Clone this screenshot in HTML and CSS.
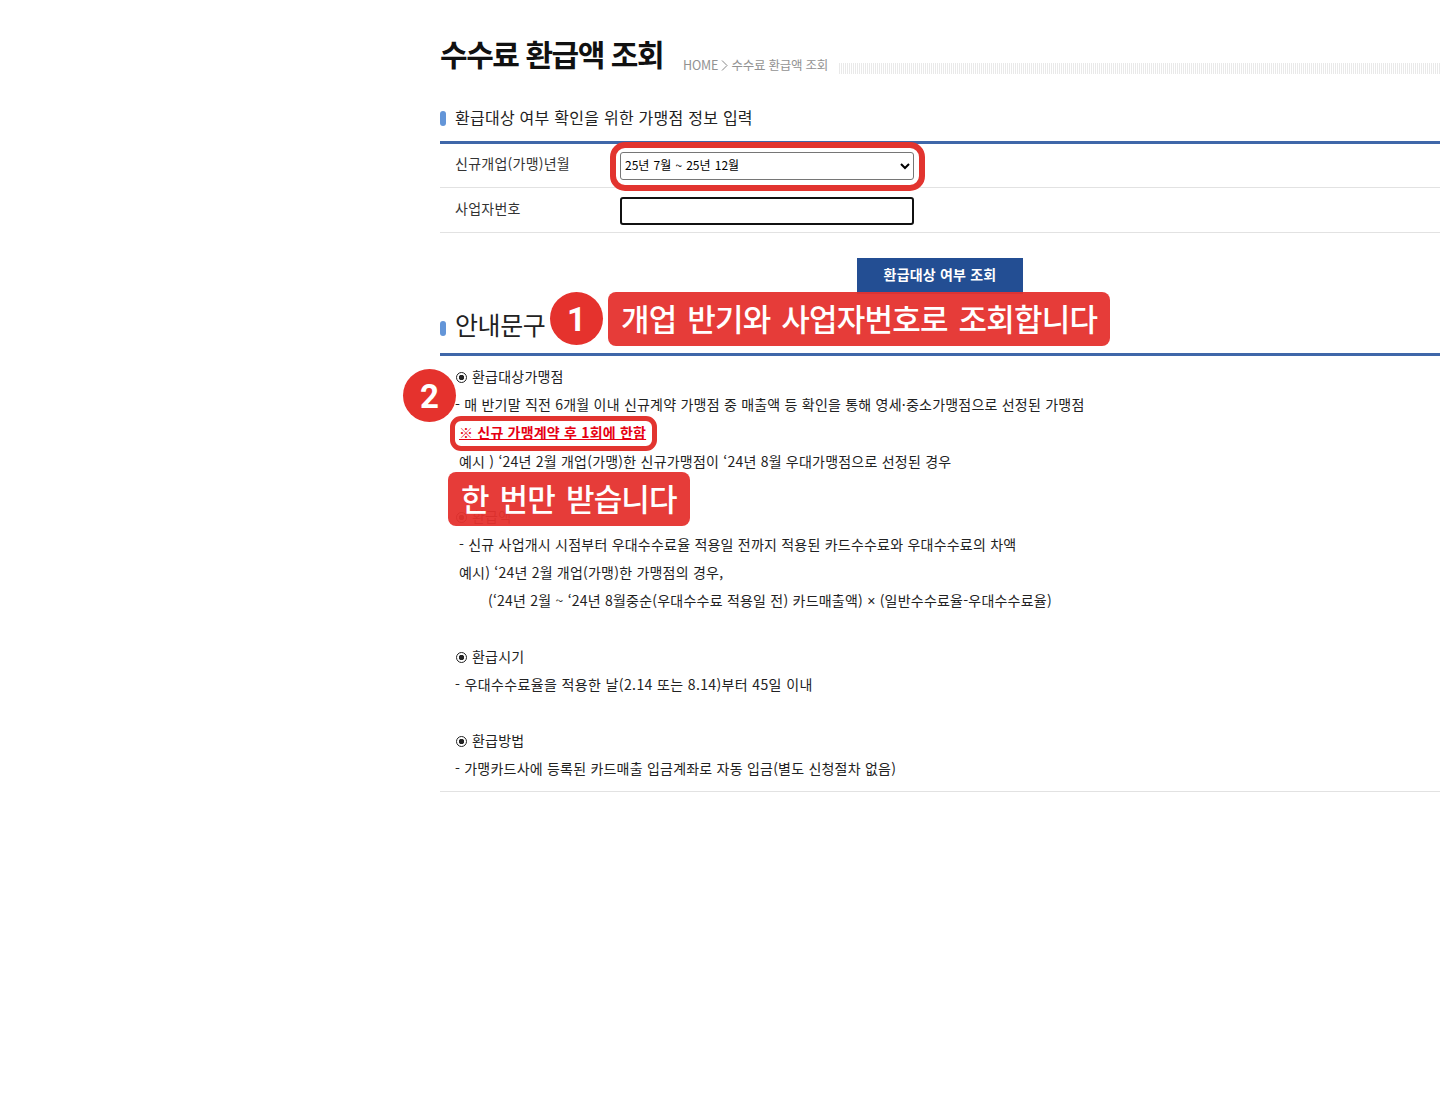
FILE: index.html
```html
<!DOCTYPE html>
<html lang="ko">
<head>
<meta charset="utf-8">
<title>수수료 환급액 조회</title>
<link rel="stylesheet" href="styles.css">
</head>
<body>
<main class="page">
  <header class="title-row">
    <h1 class="title">수수료 환급액 조회</h1>
    <div class="crumb">HOME <svg class="crumb-arrow" width="7" height="11" viewBox="0 0 7 11"><path d="M1 .5l5 5-5 5" fill="none" stroke="#888" stroke-width="1"/></svg> 수수료 환급액 조회</div>
    <div class="hatch"></div>
  </header>

  <h2 class="sub"><span class="pill"></span>환급대상 여부 확인을 위한 가맹점 정보 입력</h2>

  <div class="form">
    <div class="form-row">
      <label class="form-label">신규개업(가맹)년월</label>
      <div class="field highlight-field">
        <select class="select"><option>25년 7월 ~ 25년 12월</option></select>
      </div>
    </div>
    <div class="form-row">
      <label class="form-label">사업자번호</label>
      <div class="field"><input class="input" type="text"></div>
    </div>
  </div>

  <div class="btn-row"><button class="btn" type="button">환급대상 여부 조회</button></div>

  <h2 class="guide"><span class="pill"></span>안내문구</h2>

  <section class="notice">
    <p><span class="dot"></span>환급대상가맹점</p>
    <p>- 매 반기말 직전 6개월 이내 신규계약 가맹점 중 매출액 등 확인을 통해 영세·중소가맹점으로 선정된 가맹점</p>
    <p class="ind"><span class="red-note">※ 신규 가맹계약 후 1회에 한함</span></p>
    <p class="ind nudge">예시 ) ‘24년 2월 개업(가맹)한 신규가맹점이 ‘24년 8월 우대가맹점으로 선정된 경우</p>
    <p>&nbsp;</p>
    <p><span class="dot"></span>환급액</p>
    <p class="ind">- 신규 사업개시 시점부터 우대수수료율 적용일 전까지 적용된 카드수수료와 우대수수료의 차액</p>
    <p class="ind">예시) ‘24년 2월 개업(가맹)한 가맹점의 경우,</p>
    <p class="ind2">(‘24년 2월 ~ ‘24년 8월중순(우대수수료 적용일 전) 카드매출액) <span class="times">×</span> (일반수수료율-우대수수료율)</p>
    <p>&nbsp;</p>
    <p><span class="dot"></span>환급시기</p>
    <p class="wide">- 우대수수료율을 적용한 날(2.14 또는 8.14)부터 45일 이내</p>
    <p>&nbsp;</p>
    <p><span class="dot"></span>환급방법</p>
    <p>- 가맹카드사에 등록된 카드매출 입금계좌로 자동 입금(별도 신청절차 없음)</p>
  </section>
</main>

<div class="ann-ring ring-select"></div>
<div class="ann-ring ring-note"></div>
<div class="ann-num num-1">1</div>
<div class="ann-num num-2">2</div>
<div class="ann-label label-1">개업 반기와 사업자번호로 조회합니다</div>
<div class="ann-label label-2">한 번만 받습니다</div>
</body>
</html>
```

FILE: styles.css
```css
* { box-sizing: border-box; }
html, body { margin: 0; padding: 0; background: #fff; overflow-x: hidden; }
body { font-family: "Noto Sans CJK KR", "Noto Sans", sans-serif; color: #222; min-height: 1100px; position: relative; }
.page { margin-left: 440px; width: 1000px; padding-top: 31px; }

.title-row { display: flex; align-items: flex-end; height: 44px; }
.title { margin: 0; font-size: 30px; line-height: 44px; font-weight: 700; letter-spacing: -1.45px; color: #111; }
.crumb { margin-left: 20px; font-size: 12.5px; line-height: 18px; color: #929292; letter-spacing: -0.25px; white-space: nowrap; margin-bottom: 1px; }
.crumb-arrow { vertical-align: -1px; }
.hatch { flex: 1; height: 11px; margin-left: 11px; margin-bottom: 1px; background: repeating-linear-gradient(90deg, #e9e9e9 0 1px, #fff 1px 2px); }

.pill { display: inline-block; width: 6px; height: 15px; border-radius: 3px; background: #6395d8; margin-right: 9px; vertical-align: -2px; }
.sub { margin: 30px 0 0; font-size: 16px; line-height: 24px; font-weight: 400; color: #222; letter-spacing: 0.25px; }

.form { margin-top: 12px; border-top: 3px solid #3f67a9; }
.form-row { display: flex; align-items: center; height: 45px; border-bottom: 1px solid #e2e2e2; }
.form-row:first-child { height: 44px; }
.form-label { width: 180px; padding: 0 0 5px 15px; font-size: 14px; color: #333; letter-spacing: 0.25px; }
.select { display: block; width: 294px; height: 28px; font-family: inherit; font-size: 12px; color: #000; background: #fff; border: 1px solid #767676; border-radius: 3px; padding: 0 0 2px; letter-spacing: 0; word-spacing: 0.8px; }
.input { display: block; width: 294px; height: 28px; margin-top: 2px; border: 2px solid #111; border-radius: 3px; background: #fff; outline: none; }

.btn-row { margin-top: 25px; padding-left: 417px; }
.btn { display: block; width: 166px; height: 36px; padding: 0 0 5px; border: 0; background: #234e93; color: #fff; font-family: inherit; font-size: 14px; font-weight: 700; letter-spacing: 0.2px; }

.guide { margin: 10px 0 0; font-size: 25px; line-height: 36px; font-weight: 400; color: #222; letter-spacing: -0.4px; height: 44px; padding-top: 2px; }
.guide .pill { vertical-align: -1px; }

.notice { border-top: 3px solid #3f67a9; border-bottom: 1px solid #e2e2e2; padding: 6px 0 9px 15px; margin-top: 5px; }
.notice p { margin: 0; font-size: 14px; line-height: 28px; height: 28px; color: #222; white-space: nowrap; letter-spacing: 0.22px; }
.notice .ind { padding-left: 4px; }
.notice .ind2 { padding-left: 33px; }
.notice .nudge { line-height: 30px; }
.notice .wide { letter-spacing: 0.37px; }
.times { font-family: "Liberation Sans", sans-serif; }
.dot { display: inline-block; width: 11px; height: 11px; margin: 0 5px 0 1px; border: 1px solid #222; border-radius: 50%; vertical-align: -1px; background: radial-gradient(circle, #222 0 2.5px, #fff 3px); }
.red-note { color: #e60012; font-weight: 700; text-decoration: underline; letter-spacing: 0.2px; }

.ann-ring { position: absolute; border-style: solid; border-color: #e2342f; background: transparent; }
.ring-select { left: 610px; top: 142px; width: 315px; height: 49px; border-width: 6px; border-radius: 15px; }
.ring-note { left: 450px; top: 416px; width: 207px; height: 35px; border-width: 5px; border-radius: 11px; }
.ann-num { position: absolute; width: 53px; height: 53px; border-radius: 50%; background: #e5322d; color: #fff; font-family: Roboto, sans-serif; font-size: 33px; font-weight: 700; line-height: 56px; text-align: center; }
.num-1 { left: 550px; top: 292px; }
.num-2 { left: 403px; top: 369px; }
.ann-label { position: absolute; height: 54px; border-radius: 8px; background: rgba(229, 50, 46, 0.95); color: #fff; font-size: 31px; font-weight: 500; line-height: 52px; padding: 0 13px; white-space: nowrap; letter-spacing: -0.8px; word-spacing: 3px; }
.label-1 { left: 608px; top: 292px; }
.label-2 { left: 448px; top: 472px; }
```
